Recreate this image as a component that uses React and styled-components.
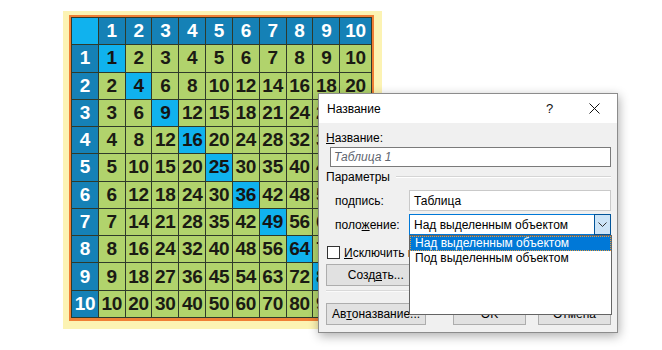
import React from "react";
import styled, { createGlobalStyle, css } from "styled-components";

const Global = createGlobalStyle`
  html, body { margin: 0; padding: 0; background: #ffffff; }
  body { font-family: "Liberation Sans", Arial, sans-serif; }
`;

const Page = styled.div`
  position: relative;
  width: 662px;
  height: 350px;
  padding: 11px 0 0 63px;
  box-sizing: border-box;
  overflow: hidden;
`;

const TableFrame = styled.div`
  display: inline-block;
  background: #fcf3b3;
  padding: 4px 8px 8px 6px;
`;

const TableBorder = styled.div`
  border: 2px solid #ef7f35;
  border-bottom-width: 3px;
`;

const Grid = styled.div`
  display: grid;
  grid-template-columns: repeat(11, 1fr);
  grid-template-rows: repeat(11, 1fr);
  gap: 1px;
  padding: 1px;
  width: 301px;
  height: 301px;
  box-sizing: border-box;
  background: #2f3a2a;
`;

const Cell = styled.div`
  display: flex;
  align-items: center;
  justify-content: center;
  font-family: "Liberation Sans", Arial, sans-serif;
  font-weight: bold;
  font-size: 19px;
  letter-spacing: -0.3px;
  ${(p) =>
    p.$kind === "head"
      ? css`background: #1581b6; color: #ffffff;`
      : p.$kind === "diag"
      ? css`background: #10b2ee; color: #151515;`
      : css`background: #b1d36c; color: #1b1b14;`}
`;

const Dialog = styled.div`
  position: absolute;
  left: 318px;
  top: 93px;
  width: 300px;
  height: 240px;
  box-sizing: border-box;
  border: 1px solid #8c8c8c;
  background: #f0f0f0;
  box-shadow: 1px 3px 10px rgba(0, 0, 0, 0.32);
  display: flex;
  flex-direction: column;
  font-family: "Liberation Sans", Arial, sans-serif;
  font-size: 12px;
  color: #000;
`;

const TitleBar = styled.div`
  height: 29px;
  background: #ffffff;
  display: flex;
  align-items: center;
`;

const Title = styled.div`
  padding-left: 8px;
  flex: 1;
  font-size: 12px;
`;

const TitleButton = styled.div`
  width: 45px;
  height: 29px;
  display: flex;
  align-items: center;
  justify-content: center;
  font-size: 13px;
  color: #111;
`;

const Body = styled.div`
  flex: 1;
  display: flex;
  flex-direction: column;
  padding: 0 6px 0 7px;
`;

const FieldLabel = styled.div`
  margin-top: 7px;
  line-height: 16px;
`;

const TextInput = styled.div`
  margin: 1px 0 0 4px;
  height: 20px;
  box-sizing: border-box;
  border: 1px solid #7a7a7a;
  background: #fff;
  display: flex;
  align-items: center;
  padding-left: 3px;
  font-style: italic;
  color: #5f6670;
`;

const GroupHeader = styled.div`
  margin-top: 2px;
  line-height: 16px;
  display: flex;
  align-items: center;
  gap: 6px;
`;

const Rule = styled.div`
  flex: 1;
  height: 1px;
  background: #d5d5d5;
  border-bottom: 1px solid #fff;
`;

const ParamRow = styled.div`
  margin-top: ${(p) => p.$gap}px;
  display: flex;
  align-items: center;
  padding-left: 9px;
  position: relative;
`;

const ParamLabel = styled.div`
  width: 74px;
`;

const Combo = styled.div`
  position: relative;
  width: 202px;
  height: 21px;
  box-sizing: border-box;
  background: #fff;
  border: 1px solid ${(p) => (p.$focused ? "#0078d7" : "#c9c9c9")};
  display: flex;
  align-items: center;
  padding-left: 4px;
`;

const ComboArrow = styled.div`
  position: absolute;
  right: -1px;
  top: -1px;
  bottom: -1px;
  width: 17px;
  background: #cce4f7;
  border: 1px solid #005499;
  box-sizing: border-box;
  display: flex;
  align-items: center;
  justify-content: center;
`;

const DropList = styled.div`
  position: absolute;
  left: 83px;
  top: 21px;
  width: 203px;
  height: 80px;
  box-sizing: border-box;
  background: #fff;
  border: 1px solid #646464;
  z-index: 5;
  padding-top: 0;
`;

const DropItem = styled.div`
  height: 15px;
  line-height: 13px;
  box-sizing: border-box;
  padding-left: 4px;
  border: 1px ${(p) => (p.$selected ? "dotted #e89a3c" : "solid transparent")};
  background: ${(p) => (p.$selected ? "#0078d7" : "transparent")};
  color: ${(p) => (p.$selected ? "#fff" : "#000")};
  white-space: nowrap;
`;

const CheckRow = styled.div`
  margin-top: 10px;
  height: 15px;
  display: flex;
  align-items: center;
  gap: 4px;
  padding-left: 1px;
  white-space: nowrap;
`;

const CheckBox = styled.div`
  width: 13px;
  height: 13px;
  box-sizing: border-box;
  border: 1px solid #333;
  background: #fff;
`;

const ButtonRow = styled.div`
  margin-top: 4px;
  display: flex;
  gap: 8px;
`;

const Button = styled.div`
  width: ${(p) => p.$w}px;
  height: 22px;
  box-sizing: border-box;
  background: #e1e1e1;
  border: 1px solid #adadad;
  display: flex;
  align-items: center;
  justify-content: center;
  white-space: nowrap;
`;

const Separator = styled.div`
  margin-top: 4px;
  height: 1px;
  background: #d9d9d9;
  border-bottom: 1px solid #fafafa;
`;

const Footer = styled.div`
  margin-top: 11px;
  display: flex;
  align-items: center;
`;

const FooterRight = styled.div`
  margin-left: auto;
  display: flex;
  gap: 12px;
`;

const rows = Array.from({ length: 11 }, (_, r) => r);

export default function App() {
  const cells = [];
  rows.forEach((r) => {
    rows.forEach((c) => {
      let kind = "body";
      let text = String(r * c);
      if (r === 0 && c === 0) {
        kind = "diag";
        text = "";
      } else if (r === 0) {
        kind = "head";
        text = String(c);
      } else if (c === 0) {
        kind = "head";
        text = String(r);
      } else if (r === c) {
        kind = "diag";
      }
      cells.push(
        <Cell key={`${r}-${c}`} $kind={kind}>
          {text}
        </Cell>
      );
    });
  });

  return (
    <>
      <Global />
      <Page>
        <TableFrame>
          <TableBorder>
            <Grid>{cells}</Grid>
          </TableBorder>
        </TableFrame>

        <Dialog>
          <TitleBar>
            <Title>Название</Title>
            <TitleButton>?</TitleButton>
            <TitleButton>
              <svg width="11" height="11" viewBox="0 0 11 11">
                <path d="M0.5 0.5 L10.5 10.5 M10.5 0.5 L0.5 10.5" stroke="#111" strokeWidth="1" fill="none" />
              </svg>
            </TitleButton>
          </TitleBar>
          <Body>
            <FieldLabel>
              <u>Н</u>азвание:
            </FieldLabel>
            <TextInput>Таблица 1</TextInput>
            <GroupHeader>
              <span>Параметры</span>
              <Rule />
            </GroupHeader>
            <ParamRow $gap={5}>
              <ParamLabel>
                по<u>д</u>пись:
              </ParamLabel>
              <Combo>Таблица</Combo>
            </ParamRow>
            <ParamRow $gap={3}>
              <ParamLabel>
                поло<u>ж</u>ение:
              </ParamLabel>
              <Combo $focused>
                Над выделенным объектом
                <ComboArrow>
                  <svg width="9" height="5" viewBox="0 0 9 5">
                    <path d="M0.5 0.5 L4.5 4.5 L8.5 0.5" stroke="#333" strokeWidth="1" fill="none" />
                  </svg>
                </ComboArrow>
              </Combo>
              <DropList>
                <DropItem $selected>Над выделенным объектом</DropItem>
                <DropItem>Под выделенным объектом</DropItem>
              </DropList>
            </ParamRow>
            <CheckRow>
              <CheckBox />
              <span>
                <u>И</u>сключить подпись из названия
              </span>
            </CheckRow>
            <ButtonRow>
              <Button $w={100}>
                Созд<u>а</u>ть...
              </Button>
              <Button $w={80}>Удалить</Button>
              <Button $w={90}>Нумерация...</Button>
            </ButtonRow>
            <Separator />
            <Footer>
              <Button $w={100}>
                Ав<u>т</u>оназвание...
              </Button>
              <FooterRight>
                <Button $w={73}>OK</Button>
                <Button $w={73}>Отмена</Button>
              </FooterRight>
            </Footer>
          </Body>
        </Dialog>
      </Page>
    </>
  );
}
